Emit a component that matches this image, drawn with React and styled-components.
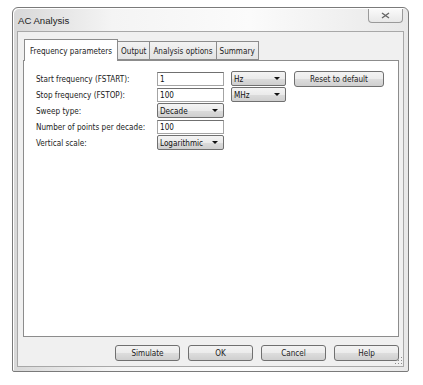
import React from 'react';
import styled, { createGlobalStyle } from 'styled-components';

const Global = createGlobalStyle`
  html, body {
    margin: 0;
    padding: 0;
    background: #ffffff;
    font-family: 'DejaVu Sans Condensed', 'Liberation Sans', Arial, sans-serif;
  }
`;

const Page = styled.div`
  width: 423px;
  height: 385px;
  padding: 7px 0 0 12px;
  box-sizing: border-box;
`;

const Window = styled.div`
  width: 397px;
  height: 365px;
  box-sizing: border-box;
  border: 1px solid #7a7a7a;
  border-radius: 6px 6px 2px 2px;
  background: linear-gradient(to right, #d8d8d8 0%, #f4f4f4 25%, #fbfbfb 60%, #e8e8e8 100%);
  display: flex;
  flex-direction: column;
  padding: 0 4px 4px 4px;
  box-shadow: inset 1px 1px 0 #ffffff;
`;

const TitleBar = styled.div`
  height: 23px;
  display: flex;
  align-items: center;
  justify-content: space-between;
  padding-left: 1px;
`;

const Title = styled.span`
  font-family: 'Liberation Sans', Arial, sans-serif;
  font-size: 9.6px;
  color: #222;
  margin-top: 2px;
`;

const CloseButton = styled.div`
  width: 33px;
  height: 13px;
  margin-top: -8px;
  margin-right: 1px;
  border: 1px solid #9a9a9a;
  border-top: none;
  border-radius: 0 0 4px 4px;
  background: linear-gradient(#fafafa, #e8e8e8);
  display: flex;
  align-items: center;
  justify-content: center;
`;

const Client = styled.div`
  flex: 1;
  background: #f0f0f0;
  border: 1px solid #a8a8a8;
  display: flex;
  flex-direction: column;
  padding: 6px 4px 5px 5px;
`;

const TabRow = styled.div`
  display: flex;
  align-items: flex-end;
  height: 22px;
  position: relative;
  z-index: 1;
`;

const Tab = styled.div`
  height: ${p => (p.$active ? '22px' : '19px')};
  box-sizing: border-box;
  padding: 0 ${p => (p.$active ? '5px' : '3px')};
  margin-left: ${p => (p.$active ? '1px' : '0')};
  border: 1px solid #8c8c8c;
  border-bottom: ${p => (p.$active ? 'none' : '1px solid #8c8c8c')};
  border-left: ${p => (p.$active ? '1px solid #8c8c8c' : 'none')};
  background: ${p => (p.$active ? '#ffffff' : 'linear-gradient(#f3f3f3, #e3e3e3)')};
  font-size: 8.1px;
  color: #222;
  display: flex;
  align-items: center;
  margin-bottom: ${p => (p.$active ? '-1px' : '0')};
`;

const Panel = styled.div`
  flex: 1;
  background: #ffffff;
  border: 1px solid #8c8c8c;
  padding: 10px 0 0 12px;
  display: flex;
  flex-direction: column;
`;

const Form = styled.div`
  display: grid;
  grid-template-columns: 121px 67px 7px 55px 8px 90px;
  grid-auto-rows: 15px;
  row-gap: 1px;
  align-items: center;
`;

const Label = styled.span`
  font-size: 8.1px;
  color: #222;
  grid-column: 1;
`;

const TextBox = styled.div`
  grid-column: 2;
  height: 14px;
  box-sizing: border-box;
  border: 1px solid #a4a4a4;
  border-top-color: #707070;
  background: #ffffff;
  font-size: 8.1px;
  padding-left: 2px;
  display: flex;
  align-items: center;
  color: #111;
`;

const Select = styled.div`
  grid-column: ${p => p.$col};
  height: 15px;
  box-sizing: border-box;
  border: 1px solid #707070;
  border-radius: 2px;
  background: linear-gradient(#f4f4f4 0%, #ebebeb 50%, #dcdcdc 51%, #cfcfcf 100%);
  font-size: 8.1px;
  color: #111;
  display: flex;
  align-items: center;
  justify-content: space-between;
  padding: 0 5px 0 2px;
`;

const Arrow = styled.span`
  width: 0;
  height: 0;
  border-left: 3px solid transparent;
  border-right: 3px solid transparent;
  border-top: 3px solid #111;
`;

const Button = styled.div`
  width: ${p => p.$w || 65}px;
  height: 16px;
  box-sizing: border-box;
  border: 1px solid #707070;
  border-radius: 3px;
  background: linear-gradient(#f3f3f3 0%, #ebebeb 50%, #dddddd 51%, #cfcfcf 100%);
  font-size: 8.1px;
  color: #222;
  display: flex;
  align-items: center;
  justify-content: center;
  grid-column: ${p => p.$col || 'auto'};
`;

const Footer = styled.div`
  display: flex;
  justify-content: flex-end;
  gap: 8px;
  padding: 8px 0 0 0;
  position: relative;
`;

const Grip = styled.svg`
  position: absolute;
  right: -4px;
  bottom: -4px;
`;

const Spacer = styled.span`
  grid-column: ${p => p.$col};
`;

export default function App() {
  return (
    <Page>
      <Global />
      <Window>
        <TitleBar>
          <Title>AC Analysis</Title>
          <CloseButton>
            <svg width="9" height="7" viewBox="0 0 9 7">
              <path d="M1 1 L8 6 M8 1 L1 6" stroke="#666" strokeWidth="1.4" fill="none" />
            </svg>
          </CloseButton>
        </TitleBar>
        <Client>
          <TabRow>
            <Tab $active>Frequency parameters</Tab>
            <Tab>Output</Tab>
            <Tab>Analysis options</Tab>
            <Tab>Summary</Tab>
          </TabRow>
          <Panel>
            <Form>
              <Label>Start frequency (FSTART):</Label>
              <TextBox>1</TextBox>
              <Select $col={4}>Hz<Arrow /></Select>
              <Button $col={6} $w={90}>Reset to default</Button>

              <Label>Stop frequency (FSTOP):</Label>
              <TextBox>100</TextBox>
              <Select $col={4}>MHz<Arrow /></Select>
              <Spacer $col={6} />

              <Label>Sweep type:</Label>
              <Select $col={2}>Decade<Arrow /></Select>
              <Spacer $col={6} />

              <Label>Number of points per decade:</Label>
              <TextBox>100</TextBox>
              <Spacer $col={6} />

              <Label>Vertical scale:</Label>
              <Select $col={2}>Logarithmic<Arrow /></Select>
              <Spacer $col={6} />
            </Form>
          </Panel>
          <Footer>
            <Button>Simulate</Button>
            <Button>OK</Button>
            <Button>Cancel</Button>
            <Button>Help</Button>
            <Grip width="8" height="8" viewBox="0 0 8 8">
              <g fill="#8a8a8a">
                <rect x="6" y="0" width="1" height="1" />
                <rect x="3" y="3" width="1" height="1" />
                <rect x="6" y="3" width="1" height="1" />
                <rect x="0" y="6" width="1" height="1" />
                <rect x="3" y="6" width="1" height="1" />
                <rect x="6" y="6" width="1" height="1" />
              </g>
            </Grip>
          </Footer>
        </Client>
      </Window>
    </Page>
  );
}
